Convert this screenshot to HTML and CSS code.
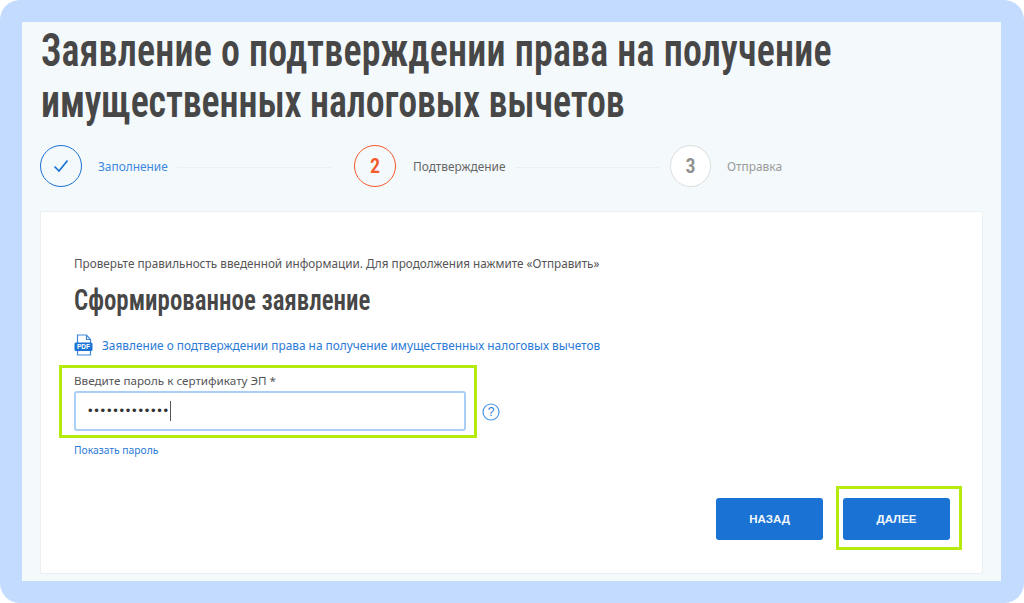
FILE: index.html
```html
<!DOCTYPE html>
<html lang="ru">
<head>
<meta charset="utf-8">
<title>Заявление</title>
<link rel="stylesheet" href="styles.css">
</head>
<body>
<div class="frame">
  <main class="page">
    <h1 class="title"><span class="title-line title-line-first">Заявление о подтверждении права на получение</span><span class="title-line title-line-second">имущественных налоговых вычетов</span></h1>
    <ol class="steps">
      <li class="step step-done">
        <span class="step-circle"><svg width="16" height="14" viewBox="0 0 16 14"><path d="M1.5 7.5 6 12 14.5 1.5" fill="none" stroke="#1a73d4" stroke-width="1.7"/></svg></span>
        <span class="step-label">Заполнение</span>
        <span class="step-line"></span>
      </li>
      <li class="step step-active">
        <span class="step-circle">2</span>
        <span class="step-label">Подтверждение</span>
        <span class="step-line"></span>
      </li>
      <li class="step step-next">
        <span class="step-circle">3</span>
        <span class="step-label">Отправка</span>
      </li>
    </ol>
    <section class="card">
      <p class="hint">Проверьте правильность введенной информации. Для продолжения нажмите «Отправить»</p>
      <h2 class="subtitle">Сформированное заявление</h2>
      <a class="doc" href="#">
        <svg class="doc-icon" width="19" height="22" viewBox="0 0 19 22">
          <path d="M3.5 9V1h9l4 4.5V9M3.5 17v4h13v-4M12.5 1v4.500h4" fill="none" stroke="#3f88dc" stroke-width="1.2"/>
          <rect x="0.500" y="8.500" width="18" height="8.500" rx="1.500" fill="#1a73d4"/>
          <text x="9.500" y="15.200" font-size="6.500" font-weight="700" text-anchor="middle" fill="#fff" font-family="Liberation Sans">PDF</text>
        </svg>
        <span>Заявление о подтверждении права на получение имущественных налоговых вычетов</span>
      </a>
      <div class="field-row">
        <div class="mark mark-field">
          <label class="field-label">Введите пароль к сертификату ЭП *</label>
          <div class="input"><span class="input-value">•••••••••••••</span></div>
        </div>
        <svg class="help" width="18" height="18" viewBox="0 0 18 18">
          <circle cx="9" cy="9" r="8" fill="none" stroke="#4a97e8" stroke-width="1.200"/>
          <text x="9" y="13.200" font-size="12" text-anchor="middle" fill="#2b7ad6" font-family="Liberation Sans">?</text>
        </svg>
      </div>
      <a class="show" href="#">Показать пароль</a>
      <div class="actions">
        <button class="btn btn-back">НАЗАД</button>
        <div class="mark mark-btn"><button class="btn">ДАЛЕЕ</button></div>
      </div>
    </section>
  </main>
</div>
</body>
</html>
```
FILE: styles.css
```css
* { box-sizing: border-box; }
html, body { margin: 0; height: 100%; background: #fff; }
body { font-family: "Noto Sans", "Liberation Sans", sans-serif; color: #4a4a4a; overflow: hidden; }
.frame {
  width: 1024px; height: 603px;
  background: #c2dbff;
  border-radius: 20px;
  padding: 22px;
}
.page {
  height: 559px; width: 979px;
  background: #f4f9fc;
  padding: 0 18px 7px 18px;
  display: flex; flex-direction: column;
}
.title {
  margin: 3px 0 0 1px;
  font-family: Roboto, "Liberation Sans", sans-serif;
  font-stretch: 75%;
  font-weight: 650;
  font-size: 46px;
  line-height: 51px;
  color: #474747;
  white-space: nowrap;
}
.title-line { display: block; transform: scaleX(0.825); transform-origin: left center; }
.title-line-first { letter-spacing: 0.250px; }
.title-line-second { letter-spacing: -0.150px; }
.steps {
  list-style: none; margin: 18px 0 0; padding: 0;
  display: grid; grid-template-columns: 315px 315px 1fr;
}
.step { display: flex; align-items: center; height: 42px; font-size: 11.900px; }
.step-circle {
  flex: none; width: 42px; height: 42px; border-radius: 50%;
  display: flex; align-items: center; justify-content: center;
  border: 1.500px solid #1a73d4;
  font-family: Roboto, sans-serif;
  font-stretch: 75%;
  font-weight: 600; font-size: 20px;
}
.step-label { margin-left: 16px; white-space: nowrap; }
.step-line { flex: 1; height: 1px; background: #ebf0f2; margin: 2px 23px 0 9px; }
.step-done .step-label { color: #3f88dc; }
.step-active .step-circle { border-color: #f4592b; color: #f4592b; margin-left: -1px; margin-right: 1px; }
.step-active .step-label { color: #666; }
.step-active .step-line { margin-right: 10px; }
.step-next .step-circle { border-color: #dcdfe0; background: #fff; color: #8f8f8f; width: 41px; }
.step-next .step-label { color: #9a9a9a; }
.card {
  flex: 1; margin-top: 24px;
  background: #fff;
  border: 1px solid #e9eff3;
  border-radius: 2px;
  padding: 42px 21px 0 33px;
  display: flex; flex-direction: column;
}
.hint { margin: 0; font-size: 11.740px; line-height: 18px; color: #555; }
.subtitle {
  margin: 12px 0 0;
  font-family: Roboto, "Liberation Sans", sans-serif;
  font-stretch: 75%;
  font-weight: 650; font-size: 30px; line-height: 32px;
  color: #474747; white-space: nowrap;
  transform: scaleX(0.83); transform-origin: left center;
}
.doc { display: flex; align-items: center; gap: 9px; margin-top: 18px; text-decoration: none; color: #2b7ad6; font-size: 11.850px; }
.doc-icon { flex: none; }
.field-row { display: flex; align-items: center; margin-top: 9px; margin-left: -15px; }
.mark { border: 3px solid #b6ea0c; }
.mark-field { width: 418px; height: 73px; padding: 5px 8px 0 12px; }
.field-label { display: block; font-size: 11.650px; line-height: 15px; color: #555; }
.input {
  margin-top: 3px; height: 40px;
  border: 2px solid #a9cff6; border-radius: 3px; background: #fff;
  padding-left: 12px;
  display: flex; align-items: center;
}
.input-value { font-family: "Liberation Sans", sans-serif; font-size: 13px; letter-spacing: 1.750px; color: #333; border-right: 1px solid #555; line-height: 20px; }
.help { margin: 20px 0 0 5px; flex: none; }
.show { margin-top: 4px; font-size: 10.300px; line-height: 16px; color: #2b7ad6; text-decoration: none; }
.actions { display: flex; justify-content: flex-end; align-items: flex-start; gap: 13px; margin: 28px -1px 0 0; }
.mark-btn { padding: 9px 9px 7px 4px; }
.btn {
  display: block; width: 107px; height: 42px;
  background: #1a73d4; color: #f2f7fc;
  border: 0; border-radius: 3px;
  font-family: "Liberation Sans", sans-serif; font-size: 11.500px; font-weight: 700;
}
.btn-back { margin-top: 12px; }
```
